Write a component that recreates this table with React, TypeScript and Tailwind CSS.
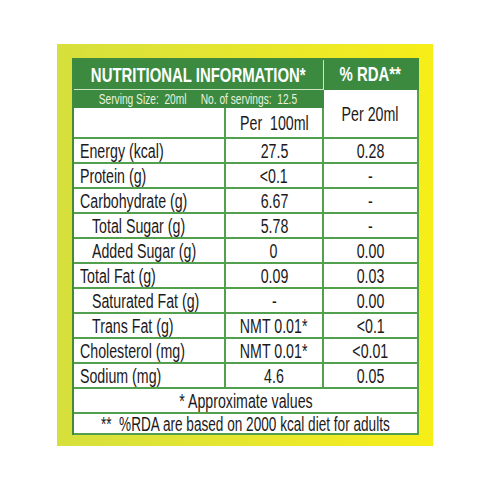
import React from "react";

const ROWS = [
  { label: "Energy (kcal)", per100: "27.5", rda: "0.28" },
  { label: "Protein (g)", per100: "<0.1", rda: "-" },
  { label: "Carbohydrate (g)", per100: "6.67", rda: "-" },
  { label: "Total Sugar (g)", per100: "5.78", rda: "-", indent: true },
  { label: "Added Sugar (g)", per100: "0", rda: "0.00", indent: true },
  { label: "Total Fat (g)", per100: "0.09", rda: "0.03" },
  { label: "Saturated Fat (g)", per100: "-", rda: "0.00", indent: true },
  { label: "Trans Fat (g)", per100: "NMT 0.01*", rda: "<0.1", indent: true },
  { label: "Cholesterol (mg)", per100: "NMT 0.01*", rda: "<0.01" },
  { label: "Sodium (mg)", per100: "4.6", rda: "0.05" },
];

// condensed look: Liberation Sans squeezed horizontally
function Txt({ children, left, tight }: { children: React.ReactNode; left?: boolean; tight?: boolean }) {
  return (
    <span
      className={
        "inline-block whitespace-nowrap " +
        (tight ? "scale-x-[0.68] " : "scale-x-[0.71] ") +
        (left ? "origin-left" : "origin-center")
      }
    >
      {children}
    </span>
  );
}

const cell = "border-r-2 border-b-2 border-[#52a04d] flex items-center";

export default function App() {
  return (
    <div className="w-[490px] h-[490px] bg-white flex items-center justify-center font-['Liberation_Sans',Arial,sans-serif] text-[#1c1a1b]">
      <div className="w-[376px] h-[402px] bg-gradient-to-r from-[#d6e03c] via-[#e6e62e] to-[#f7ee17] pt-[14px] pl-[15px]">
        <div className="w-[347px] grid grid-cols-[152px_98px_95px] grid-rows-[30px_18px_31px_repeat(11,25px)_21px] border-l-2 border-t-2 border-[#3f8a3f] bg-white">
          {/* header */}
          <div className="col-span-2 bg-[#3c8a3f] border-r border-b border-[#cfe3c6] flex items-center justify-center text-white text-[21px] font-bold">
            <Txt>NUTRITIONAL INFORMATION*</Txt>
          </div>
          <div className="bg-[#3c8a3f] border-r-2 border-b-2 border-[#3c8a3f] flex items-center justify-center text-white text-[21px] font-bold">
            <Txt>% RDA**</Txt>
          </div>

          {/* serving row */}
          <div className="col-span-2 bg-[#3c8a3f] border-r-2 border-b-2 border-[#3c8a3f] flex items-center justify-center text-[#e8f2de] text-[15px] leading-none">
            <Txt tight>
              Serving Size:&nbsp; 20ml&nbsp;&nbsp;&nbsp;&nbsp; No. of servings:&nbsp; 12.5
            </Txt>
          </div>
          <div className={cell + " row-span-2 justify-center text-[20px]"}>
            <Txt>Per 20ml</Txt>
          </div>
          <div className={cell} />
          <div className={cell + " justify-center text-[20px]"}>
            <Txt>Per&nbsp; 100ml</Txt>
          </div>

          {ROWS.map((r) => (
            <React.Fragment key={r.label}>
              <div className={cell + " text-[20px] " + (r.indent ? "pl-[18px]" : "pl-[6px]")}>
                <Txt left>{r.label}</Txt>
              </div>
              <div className={cell + " justify-center text-[20px]"}>
                <Txt>{r.per100}</Txt>
              </div>
              <div className={cell + " justify-center text-[20px]"}>
                <Txt>{r.rda}</Txt>
              </div>
            </React.Fragment>
          ))}

          {/* footer */}
          <div className={cell + " col-span-3 justify-center text-[20px]"}>
            <Txt>* Approximate values</Txt>
          </div>
          <div className={cell + " col-span-3 justify-center text-[20px]"}>
            <Txt tight>**&nbsp; %RDA are based on 2000 kcal diet for adults</Txt>
          </div>
        </div>
      </div>
    </div>
  );
}
